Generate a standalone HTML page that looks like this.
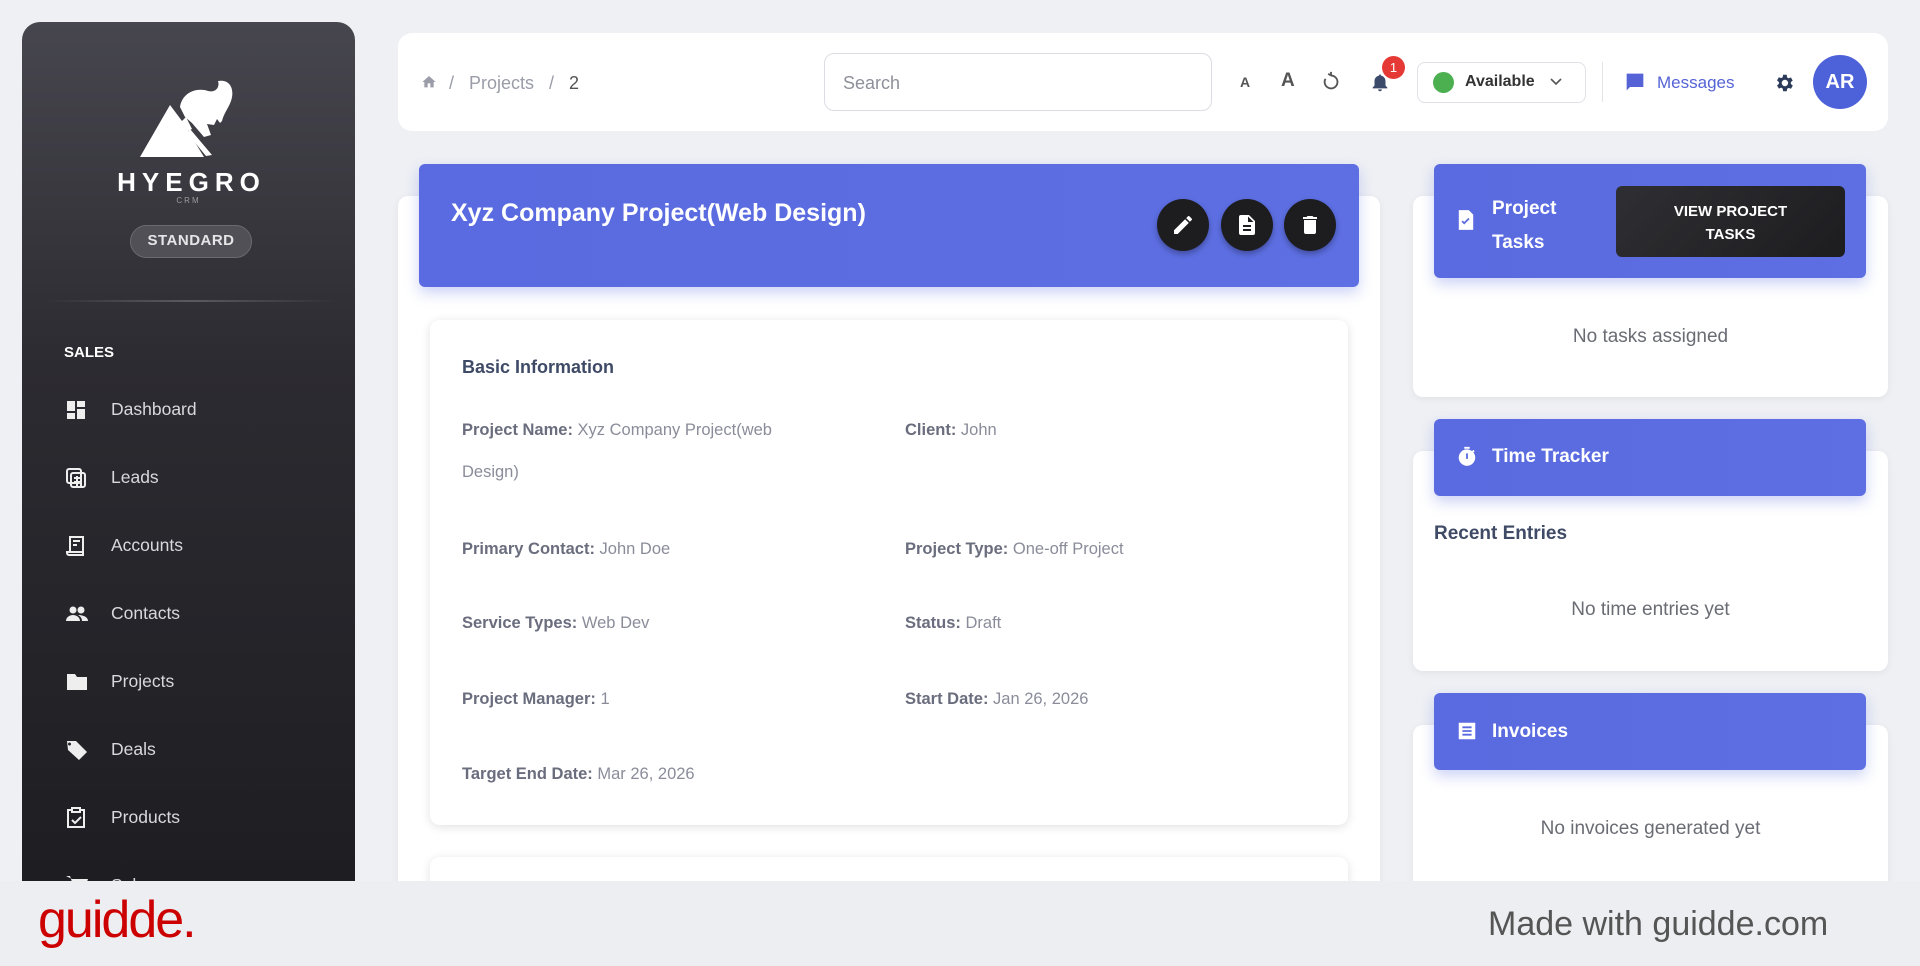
<!DOCTYPE html>
<html><head><meta charset="utf-8"><style>
*{box-sizing:border-box;margin:0;padding:0}
body{width:1920px;height:966px;overflow:hidden;background:#eef0f4;font-family:"Liberation Sans",sans-serif;position:relative}
.abs{position:absolute}
.sb{left:22px;top:22px;width:333px;height:859px;border-radius:18px 18px 0 0;background:linear-gradient(180deg,#47464e 0%,#2c2b31 40%,#1e1e22 100%);overflow:hidden}
.nav{position:absolute;left:42px;color:#d9d9dc;font-size:17.5px}
.nav svg{position:absolute;left:0;top:-11px}
.nav span{position:absolute;left:47px;top:-10px;white-space:nowrap}
.top{left:398px;top:33px;width:1490px;height:98px;background:#fff;border-radius:14px}
.blue{background:linear-gradient(90deg,#5a6ae0,#5d6fe2);border-radius:6px;box-shadow:0 6px 14px rgba(90,110,224,.3)}
.card{background:#fff;border-radius:10px;box-shadow:0 2px 8px rgba(0,0,0,.06)}
.lbl{position:absolute;font-size:16.5px;color:#8a8c9a;white-space:nowrap}
.lbl b{color:#6a6d7d}
.circ{position:absolute;width:52px;height:52px;border-radius:50%;background:#1d1d1f;top:199px;box-shadow:0 3px 6px rgba(0,0,0,.3)}
.circ svg{position:absolute;left:14px;top:14px}
.empty{position:absolute;font-size:19px;color:#6a6c74;text-align:center;width:475px;left:1413px}
.hdr{position:absolute;color:#fff;font-weight:bold;font-size:19px}
</style></head><body>

<div class="abs sb">
  <svg class="abs" style="left:118px;top:57px" width="100" height="78" viewBox="0 0 100 78">
    <path d="M0 78 L30 26 L42 42 L46 38 L52 50 L48 52 L64 78 Z" fill="#fff"/>
    <path d="M40 28 C42 14 56 8 68 12 C76 14 80 8 78 2 C90 0 95 10 91 22 C88 30 84 34 82 42 L80 44 L77 40 L74 46 L67 45 L71 56 L64 58 L52 44 L45 38 Z" fill="#fff"/>
    <path d="M50 50 L72 76 L66 77 L47 54 Z" fill="#fff"/>
  </svg>
  <div class="abs" style="left:0;width:333px;top:145px;text-align:center;color:#fff;font-weight:bold;font-size:26px;letter-spacing:6px;padding-left:6px">HYEGRO</div>
  <div class="abs" style="left:0;width:333px;top:174px;text-align:center;color:#9a9aa0;font-size:8px;letter-spacing:2px">CRM</div>
  <div class="abs" style="left:108px;top:203px;width:122px;height:33px;border-radius:17px;border:1.5px solid #6b6a72;background:#505056;color:#e6e6e8;font-size:15px;text-align:center;line-height:30px;font-weight:bold;letter-spacing:.5px">STANDARD</div>
  <div class="abs" style="left:22px;top:278px;width:292px;height:2px;background:linear-gradient(90deg,transparent,#5a5a60,transparent)"></div>
  <div class="abs" style="left:42px;top:322px;color:#fff;font-weight:bold;font-size:15px">SALES</div>
  <div class="nav" style="top:387px"><svg width="24" height="24" viewBox="0 0 24 24" fill="#eee"><path d="M3 13h8V3H3zm0 8h8v-6H3zm10 0h8V11h-8zm0-18v6h8V3z"/></svg><span>Dashboard</span></div>
  <div class="nav" style="top:455px"><svg width="24" height="24" viewBox="0 0 24 24" fill="none" stroke="#eee" stroke-width="2"><rect x="3" y="3" width="14" height="14" rx="2"/><rect x="7" y="7" width="14" height="14" rx="2"/><path d="M10 12h8M10 16h8M13 10v10M17 10v10"/></svg><span>Leads</span></div>
  <div class="nav" style="top:523px"><svg width="24" height="24" viewBox="0 0 24 24" fill="none" stroke="#eee" stroke-width="2"><path d="M6 3h13v15H6zM3 18h16v3H5a2 2 0 0 1-2-2zM9 7h7M9 11h4"/></svg><span>Accounts</span></div>
  <div class="nav" style="top:591px"><svg width="26" height="24" viewBox="0 0 24 24" fill="#eee"><circle cx="8" cy="8" r="3.5"/><circle cx="16" cy="8" r="3.5"/><path d="M1 19c0-4 4-6 7-6s7 2 7 6zM13 13c3 0 10 1 10 6h-6c0-3-2-5-4-6z"/></svg><span>Contacts</span></div>
  <div class="nav" style="top:659px"><svg width="26" height="24" viewBox="0 0 24 24" fill="#eee"><path d="M2 4h8l2 3h10v13H2z"/></svg><span>Projects</span></div>
  <div class="nav" style="top:727px"><svg width="26" height="24" viewBox="0 0 24 24" fill="#eee"><path d="M2 3h9l11 11-8 8L3 12zM6 6a1.5 1.5 0 1 0 0 .1z"/></svg><span>Deals</span></div>
  <div class="nav" style="top:795px"><svg width="24" height="24" viewBox="0 0 24 24" fill="none" stroke="#eee" stroke-width="2"><path d="M8 4H4v17h16V4h-4M8 2h8v4H8zM8 14l3 3 6-6"/></svg><span>Products</span></div>
  <div class="nav" style="top:863px"><svg width="26" height="24" viewBox="0 0 24 24" fill="#eee"><path d="M1 2h4l4 12h11l3-9H7"/></svg><span>Sales</span></div>
</div>

<div class="abs top"></div>
<svg class="abs" style="left:420px;top:74px" width="18" height="16" viewBox="0 0 24 24" fill="#9a9ca8"><path d="M10 20v-6h4v6h5v-8h3L12 3 2 12h3v8z"/></svg>
<div class="abs" style="left:449px;top:73px;font-size:18px;color:#9a9ca8">/&nbsp;&nbsp;&nbsp;Projects&nbsp;&nbsp;&nbsp;/&nbsp;&nbsp;&nbsp;<span style="color:#555">2</span></div>
<div class="abs" style="left:824px;top:53px;width:388px;height:58px;border:1.5px solid #dcdde2;border-radius:10px;font-size:18px;color:#8e909a;padding:19px 0 0 18px">Search</div>
<div class="abs" style="left:1240px;top:74px;font-size:14px;color:#555;font-weight:bold">A</div>
<div class="abs" style="left:1281px;top:70px;font-size:19px;color:#555;font-weight:bold">A</div>
<svg class="abs" style="left:1320px;top:71px" width="22" height="22" viewBox="0 0 24 24" fill="none" stroke="#555" stroke-width="2"><path d="M12 5a7 7 0 1 1-6 3.5M12 5V1M12 5l-3-2"/></svg>
<svg class="abs" style="left:1369px;top:70px" width="22" height="24" viewBox="0 0 24 24" fill="#3b4a6b"><path d="M12 22a2 2 0 0 0 2-2h-4a2 2 0 0 0 2 2zm6-6v-5c0-3-2-5.5-5-6V4h-2v1c-3 .5-5 3-5 6v5l-2 2v1h16v-1z"/></svg>
<div class="abs" style="left:1382px;top:56px;width:23px;height:23px;border-radius:50%;background:#e53935;color:#fff;font-size:13px;text-align:center;line-height:23px">1</div>
<div class="abs" style="left:1417px;top:62px;width:169px;height:41px;border:1.5px solid #e0e1e6;border-radius:8px"></div>
<div class="abs" style="left:1433px;top:72px;width:21px;height:21px;border-radius:50%;background:#4caf50"></div>
<div class="abs" style="left:1465px;top:73px;font-size:16px;font-weight:bold;color:#333">Available</div>
<svg class="abs" style="left:1549px;top:76px" width="14" height="12" viewBox="0 0 14 12" fill="none" stroke="#555" stroke-width="1.6"><path d="M2 3l5 5 5-5"/></svg>
<div class="abs" style="left:1602px;top:62px;width:1px;height:40px;background:#e3e4e8"></div>
<svg class="abs" style="left:1625px;top:72px" width="20" height="20" viewBox="0 0 24 24" fill="#5563d6"><path d="M2 2h20v16H6l-4 4zM6 7h12v2H6zm0 4h9v2H6z"/></svg>
<div class="abs" style="left:1657px;top:73px;font-size:17px;color:#5563d6">Messages</div>
<svg class="abs" style="left:1773px;top:72px" width="22" height="22" viewBox="0 0 24 24" fill="#2d3b5a"><path d="M19.4 13a7.5 7.5 0 0 0 0-2l2.1-1.6-2-3.5-2.5 1a7 7 0 0 0-1.7-1L15 3h-4l-.4 2.7a7 7 0 0 0-1.7 1l-2.5-1-2 3.5L6.5 11a7.5 7.5 0 0 0 0 2l-2.1 1.6 2 3.5 2.5-1a7 7 0 0 0 1.7 1L11 21h4l.4-2.7a7 7 0 0 0 1.7-1l2.5 1 2-3.5zM13 15.5a3.5 3.5 0 1 1 0-7 3.5 3.5 0 0 1 0 7z"/></svg>
<div class="abs" style="left:1813px;top:55px;width:54px;height:54px;border-radius:50%;background:#4d62d8;color:#fff;font-weight:bold;font-size:20px;text-align:center;line-height:54px">AR</div>

<!-- main -->
<div class="abs card" style="left:398px;top:196px;width:982px;height:700px"></div>
<div class="abs blue" style="left:419px;top:164px;width:940px;height:123px"></div>
<div class="abs" style="left:451px;top:199px;color:#fff;font-weight:bold;font-size:25px">Xyz Company Project(Web Design)</div>
<div class="circ" style="left:1157px"><svg width="24" height="24" viewBox="0 0 24 24" fill="#fff"><path d="M3 17.3V21h3.7L17.8 9.9l-3.7-3.7zM20.7 7a1 1 0 0 0 0-1.4l-2.3-2.3a1 1 0 0 0-1.4 0l-1.8 1.8 3.7 3.7z"/></svg></div>
<div class="circ" style="left:1221px"><svg width="24" height="24" viewBox="0 0 24 24" fill="#fff"><path d="M14 2H6a2 2 0 0 0-2 2v16a2 2 0 0 0 2 2h12a2 2 0 0 0 2-2V8zM16 18H8v-2h8zm0-4H8v-2h8zm-3-5V3.5L18.5 9z"/></svg></div>
<div class="circ" style="left:1284px"><svg width="24" height="24" viewBox="0 0 24 24" fill="#fff"><path d="M6 19a2 2 0 0 0 2 2h8a2 2 0 0 0 2-2V7H6zM19 4h-3.5l-1-1h-5l-1 1H5v2h14z"/></svg></div>

<div class="abs card" style="left:430px;top:320px;width:918px;height:505px;box-shadow:0 2px 10px rgba(0,0,0,.12)"></div>
<div class="abs" style="left:462px;top:357px;font-size:18px;font-weight:bold;color:#3e4a66">Basic Information</div>
<div class="lbl" style="left:462px;top:421px"><b>Project Name:</b> Xyz Company Project(web</div>
<div class="lbl" style="left:462px;top:463px">Design)</div>
<div class="lbl" style="left:905px;top:421px"><b>Client:</b> John</div>
<div class="lbl" style="left:462px;top:540px"><b>Primary Contact:</b> John Doe</div>
<div class="lbl" style="left:905px;top:540px"><b>Project Type:</b> One-off Project</div>
<div class="lbl" style="left:462px;top:614px"><b>Service Types:</b> Web Dev</div>
<div class="lbl" style="left:905px;top:614px"><b>Status:</b> Draft</div>
<div class="lbl" style="left:462px;top:690px"><b>Project Manager:</b> 1</div>
<div class="lbl" style="left:905px;top:690px"><b>Start Date:</b> Jan 26, 2026</div>
<div class="lbl" style="left:462px;top:765px"><b>Target End Date:</b> Mar 26, 2026</div>
<div class="abs card" style="left:430px;top:857px;width:918px;height:40px;box-shadow:0 2px 10px rgba(0,0,0,.12)"></div>

<!-- right -->
<div class="abs card" style="left:1413px;top:196px;width:475px;height:201px"></div>
<div class="abs blue" style="left:1434px;top:164px;width:432px;height:114px"></div>
<svg class="abs" style="left:1457px;top:209px" width="18" height="22" viewBox="0 0 20 24" fill="#fff"><path d="M2 1h11l5 5v17H2zM5 14l3 3 6-6-1.4-1.4L8 14.2 6.4 12.6z" fill-rule="evenodd"/></svg>
<div class="hdr" style="left:1492px;top:192px;line-height:34px">Project<br>Tasks</div>
<div class="abs" style="left:1616px;top:186px;width:229px;height:71px;border-radius:6px;background:linear-gradient(135deg,#2f2f33,#1d1d20);color:#fff;font-weight:bold;font-size:15px;text-align:center;padding-top:14px;line-height:23px">VIEW PROJECT<br>TASKS</div>
<div class="empty" style="top:326px">No tasks assigned</div>

<div class="abs card" style="left:1413px;top:451px;width:475px;height:220px"></div>
<div class="abs blue" style="left:1434px;top:419px;width:432px;height:77px"></div>
<svg class="abs" style="left:1456px;top:445px" width="22" height="24" viewBox="0 0 24 24" fill="#fff"><path d="M9 1h6v2H9zM19 7l1.4-1.4-1.4-1.4L17.6 5.6A9 9 0 1 0 19 7zM13 14h-2V8h2z"/></svg>
<div class="hdr" style="left:1492px;top:446px">Time Tracker</div>
<div class="abs" style="left:1434px;top:523px;font-size:19px;font-weight:bold;color:#3e4a66">Recent Entries</div>
<div class="empty" style="top:599px">No time entries yet</div>

<div class="abs card" style="left:1413px;top:725px;width:475px;height:170px"></div>
<div class="abs blue" style="left:1434px;top:693px;width:432px;height:77px"></div>
<svg class="abs" style="left:1456px;top:720px" width="22" height="22" viewBox="0 0 24 24" fill="#fff"><path d="M3 3h18v18H3zM7 7v2h10V7zm0 4v2h10v-2zm0 4v2h10v-2z" fill-rule="evenodd"/></svg>
<div class="hdr" style="left:1492px;top:721px">Invoices</div>
<div class="empty" style="top:818px">No invoices generated yet</div>

<!-- footer -->
<div class="abs" style="left:0;top:881px;width:1920px;height:85px;background:#edeef1"></div>
<div class="abs" style="left:38px;top:890px;font-size:52px;color:#cc0000;letter-spacing:-2px">guidde.</div>
<div class="abs" style="left:1488px;top:905px;font-size:34px;color:#555">Made with guidde.com</div>
</body></html>
